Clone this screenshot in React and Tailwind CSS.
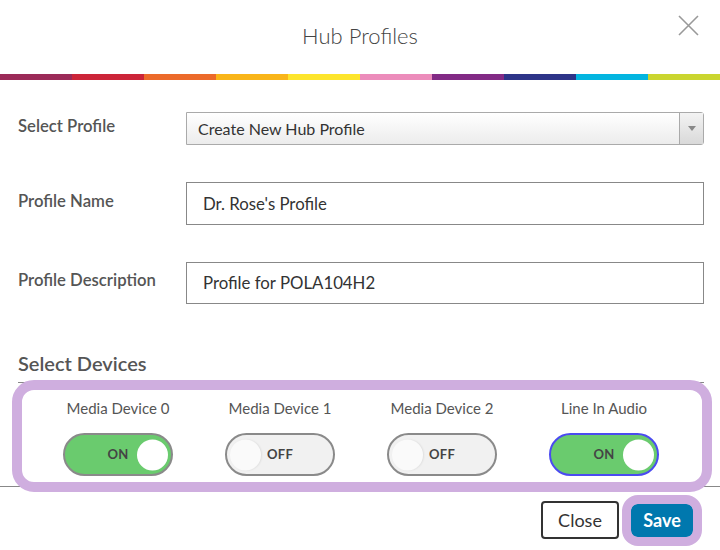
import React from "react";

const stripes = [
  "bg-[#9b2a58]",
  "bg-[#cc2539]",
  "bg-[#ec6a2a]",
  "bg-[#f9b519]",
  "bg-[#fde52c]",
  "bg-[#ec8cbb]",
  "bg-[#822a85]",
  "bg-[#2d3488]",
  "bg-[#03b5e0]",
  "bg-[#cad52f]",
];

const devices = [
  { name: "Media Device 0", on: true },
  { name: "Media Device 1", on: false },
  { name: "Media Device 2", on: false },
  { name: "Line In Audio", on: true, focus: true },
];

function Toggle({ on, focus }) {
  if (on) {
    return (
      <div
        className={`relative flex h-[43px] w-[110px] items-center justify-center rounded-full border-2 bg-[#6acb6e] ${
          focus ? "border-[#4b4bf0]" : "border-[#8a8a8a]"
        }`}
      >
        <span className="text-[13px] font-bold tracking-wide text-[#444]">ON</span>
        <span className="absolute right-[3px] top-1/2 h-[31px] w-[31px] -translate-y-1/2 rounded-full bg-white" />
      </div>
    );
  }
  return (
    <div className="relative flex h-[43px] w-[110px] items-center justify-center rounded-full border-2 border-[#8a8a8a] bg-[#f1f1f1]">
      <span className="text-[13px] font-bold tracking-wide text-[#444]">OFF</span>
      <span className="absolute left-[3px] top-1/2 h-[31px] w-[31px] -translate-y-1/2 rounded-full bg-[#fafafa] shadow-[1px_0_2px_rgba(0,0,0,0.08)]" />
    </div>
  );
}

export default function App() {
  return (
    <div
      className="relative h-[550px] w-[720px] overflow-hidden bg-white"
      style={{ fontFamily: "Lato, 'Open Sans', sans-serif" }}
    >
      {/* Header */}
      <div className="relative flex h-[74px] items-center justify-center">
        <h1 className="-mt-[4px] text-[22px] font-light text-[#444]">Hub Profiles</h1>
        <button className="absolute right-[21px] top-[15px] h-[21px] w-[21px]">
          <svg viewBox="0 0 21 21" className="h-[21px] w-[21px]">
            <path d="M1 1 L20 20 M20 1 L1 20" stroke="#999" strokeWidth="1.6" fill="none" />
          </svg>
        </button>
      </div>
      <div className="flex h-[6px]">
        {stripes.map((c) => (
          <div key={c} className={`h-full flex-1 ${c}`} />
        ))}
      </div>

      {/* Form */}
      <div className="pl-[18px] pr-[16px]">
        <div className="mt-[32px] flex items-center">
          <label className="w-[168px] -mt-[4px] text-[16.7px] font-semibold text-[#555]">
            Select Profile
          </label>
          <div className="flex h-[33px] flex-1 items-stretch rounded-r-[3px] border border-[#aaa] bg-gradient-to-b from-white to-[#ececec]">
            <span className="flex flex-1 items-center pl-[11px] text-[16px] text-[#333]">
              Create New Hub Profile
            </span>
            <span className="flex w-[24px] items-center justify-center border-l border-[#aaa] bg-gradient-to-b from-[#f3f3f3] to-[#d9d9d9]">
              <svg viewBox="0 0 8 5" className="h-[5px] w-[8px]">
                <path d="M0 0 L8 0 L4 5 Z" fill="#888" />
              </svg>
            </span>
          </div>
        </div>

        <div className="mt-[37px] flex items-center">
          <label className="w-[168px] -mt-[4px] text-[16.7px] font-semibold text-[#555]">
            Profile Name
          </label>
          <div className="flex h-[43px] flex-1 items-center border border-[#888] pl-[16px] text-[16.8px] text-[#333]">
            Dr. Rose's Profile
          </div>
        </div>

        <div className="mt-[37px] flex items-center">
          <label className="w-[168px] -mt-[4px] text-[16.7px] font-semibold text-[#555]">
            Profile Description
          </label>
          <div className="flex h-[42px] flex-1 items-center border border-[#888] pl-[16px] text-[16.8px] text-[#333]">
            Profile for POLA104H2
          </div>
        </div>

        <h2 className="mt-[45px] text-[20px] font-semibold leading-[28px] text-[#555]">
          Select Devices
        </h2>
        <div className="mt-[5px] border-t border-[#888]" />

        <div className="grid grid-cols-4 px-[19px]">
          {devices.map((d) => (
            <div key={d.name} className="flex flex-col items-center">
              <span className="mt-[15px] text-[15px] leading-[20px] text-[#555]">{d.name}</span>
              <div className="mt-[15px]">
                <Toggle on={d.on} focus={d.focus} />
              </div>
            </div>
          ))}
        </div>
      </div>

      {/* Footer */}
      <div className="mt-[10px] border-t border-[#888]" />
      <div className="flex items-center justify-end gap-[12px] pr-[27px] pt-[14px]">
        <button className="h-[38px] w-[78px] rounded-[4px] border-2 border-[#333] text-[18px] text-[#333]">
          Close
        </button>
        <div className="relative">
          <button className="h-[33px] w-[62px] rounded-[6px] bg-[#0078ae] text-[18px] font-bold text-white">
            Save
          </button>
          <div className="pointer-events-none absolute -inset-[9px] rounded-[16px] border-[9px] border-[#cfaedf]" />
        </div>
      </div>

      {/* Highlight overlay */}
      <div className="pointer-events-none absolute left-[12px] top-[380px] h-[112px] w-[700px] rounded-[22px] border-[10px] border-[#cfaedf]" />
    </div>
  );
}
